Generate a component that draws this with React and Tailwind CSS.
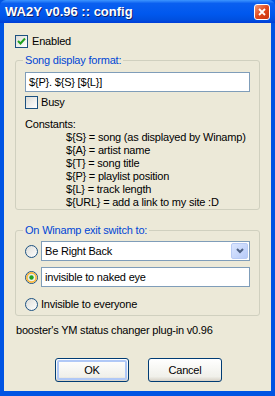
import React from "react";

const font = "font-['Liberation_Sans',Arial,sans-serif]";

const CheckBox = ({ checked }) => (
  <span className="w-[13px] h-[13px] shrink-0 border border-[#1c5180] bg-[linear-gradient(135deg,#dcdcd7,#ffffff)] flex items-center justify-center">
    {checked && (
      <svg width="9" height="9" viewBox="0 0 9 9">
        <path d="M1 4 L3.5 6.5 L8 1.5" fill="none" stroke="#21a121" strokeWidth="2" />
      </svg>
    )}
  </span>
);

const Radio = ({ checked }) => (
  <svg width="13" height="13" viewBox="0 0 13 13" className="shrink-0">
    <defs>
      <linearGradient id="rg" x1="0" y1="0" x2="1" y2="1">
        <stop offset="0" stopColor="#dcdcd7" />
        <stop offset="1" stopColor="#ffffff" />
      </linearGradient>
    </defs>
    <circle cx="6.5" cy="6.5" r="6" fill="url(#rg)" stroke="#1c5180" />
    {checked && (
      <>
        <circle cx="6.5" cy="6.5" r="4.6" fill="none" stroke="#f8b636" strokeWidth="1.6" />
        <circle cx="6.5" cy="6.5" r="2.2" fill="#21a121" />
      </>
    )}
  </svg>
);

const Group = ({ label, children, className }) => (
  <fieldset className={`mx-[11px] border border-[#d0d0bf] rounded-[3px] px-[9px] ${className}`}>
    <legend className="ml-[-2px] px-[2px] text-[#0046d5] leading-[13px]">{label}</legend>
    {children}
  </fieldset>
);

const Button = ({ children, primary }) => (
  <button className="w-[74px] h-[24px] rounded-[3px] border border-[#003c74] bg-[linear-gradient(to_bottom,#ffffff,#f0f0ea_80%,#d6d0c5)] text-black p-[1px]">
    <span
      className={`w-full h-full flex items-center justify-center rounded-[2px] ${
        primary ? "border-2 border-[#b0c8f6]" : ""
      }`}
    >
      {children}
    </span>
  </button>
);

export default function App() {
  const constants = [
    "${S} = song (as displayed by Winamp)",
    "${A} = artist name",
    "${T} = song title",
    "${P} = playlist position",
    "${L} = track length",
    "${URL} = add a link to my site :D",
  ];

  return (
    <div className={`w-[275px] h-[396px] flex flex-col bg-[#0054e3] ${font} text-[11px] tracking-[-0.2px] text-black`}>
      <div className="h-[23px] shrink-0 flex items-center justify-between pl-[5px] pr-[5px] rounded-t-[6px] bg-[linear-gradient(to_bottom,#3d95ff,#0a5ff0_15%,#0058ee_60%,#0050e0_85%,#003dd7)]">
        <span className="text-white font-bold text-[13px] tracking-[0px] [text-shadow:1px_1px_0_#0f1f6b]">
          WA2Y v0.96 :: config
        </span>
        <span className="w-[16px] h-[16px] rounded-[3px] border border-white bg-[linear-gradient(135deg,#f19a7b,#e0491c_50%,#c9330f)] flex items-center justify-center">
          <svg width="8" height="8" viewBox="0 0 8 8">
            <path d="M1 1 L7 7 M7 1 L1 7" stroke="#fff" strokeWidth="1.8" />
          </svg>
        </span>
      </div>

      <div className="flex-1 mx-[4px] mb-[5px] bg-[#ece9d8] flex flex-col">
        <label className="flex items-center gap-[4px] ml-[11px] mt-[12px] h-[13px]">
          <CheckBox checked />
          <span>Enabled</span>
        </label>

        <Group label="Song display format:" className="mt-[6px] h-[156px]">
          <div className="mt-[5px] h-[20px] border border-[#7f9db9] bg-white flex items-center px-[3px]">
            ${"{P}"}. ${"{S}"} [${"{L}"}]
          </div>
          <label className="flex items-center gap-[3px] mt-[4px] h-[13px]">
            <CheckBox />
            <span>Busy</span>
          </label>
          <div className="mt-[9px] leading-[13px]">Constants:</div>
          <div className="ml-[41px] leading-[13px] whitespace-nowrap">
            {constants.map((c) => (
              <div key={c}>{c}</div>
            ))}
          </div>
        </Group>

        <Group label="On Winamp exit switch to:" className="mt-[14px] h-[92px]">
          <div className="flex items-center gap-[3px] mt-[4px]">
            <Radio />
            <div className="flex-1 h-[20px] border border-[#7f9db9] bg-white flex items-center justify-between pl-[3px] pr-[1px]">
              <span>Be Right Back</span>
              <span className="w-[17px] h-[16px] rounded-[2px] border border-[#b8cbf5] bg-[linear-gradient(135deg,#dbe6fe,#b7cbf9)] flex items-center justify-center">
                <svg width="8" height="6" viewBox="0 0 8 6">
                  <path d="M1 1 L4 4 L7 1" fill="none" stroke="#4d6185" strokeWidth="2" />
                </svg>
              </span>
            </div>
          </div>
          <div className="flex items-center gap-[3px] mt-[6px]">
            <Radio checked />
            <div className="flex-1 h-[20px] border border-[#7f9db9] bg-white flex items-center pl-[3px]">
              invisible to naked eye
            </div>
          </div>
          <label className="flex items-center gap-[3px] mt-[11px] h-[13px]">
            <Radio />
            <span>Invisible to everyone</span>
          </label>
        </Group>

        <div className="ml-[12px] mt-[8px] leading-[13px]">booster's YM status changer plug-in v0.96</div>

        <div className="flex gap-[19px] ml-[51px] mt-[21px]">
          <Button primary>OK</Button>
          <Button>Cancel</Button>
        </div>
      </div>
    </div>
  );
}
